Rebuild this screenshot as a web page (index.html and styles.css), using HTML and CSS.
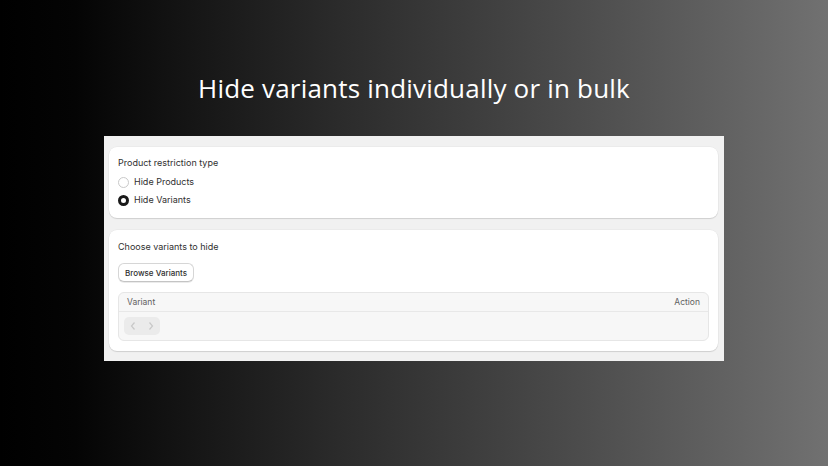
FILE: index.html
```html
<!DOCTYPE html>
<html>
<head>
<meta charset="utf-8">
<link rel="stylesheet" href="styles.css">
</head>
<body>
<div class="stage">
  <h1 class="title">Hide variants individually or in bulk</h1>
  <div class="shot">
    <section class="card card-first">
      <div class="label">Product restriction type</div>
      <div class="radio-row"><span class="radio"></span><span>Hide Products</span></div>
      <div class="radio-row"><span class="radio checked"></span><span>Hide Variants</span></div>
    </section>
    <section class="card card-second">
      <div class="label">Choose variants to hide</div>
      <button class="btn">Browse Variants</button>
      <div class="table">
        <div class="thead"><span>Variant</span><span>Action</span></div>
        <div class="tbody">
          <div class="pager">
            <span class="pg"><svg width="8" height="10" viewBox="0 0 8 10"><path d="M5.5 1.5 L2.5 5 L5.5 8.5" fill="none" stroke="#c8c8c8" stroke-width="1.2"/></svg></span>
            <span class="pg"><svg width="8" height="10" viewBox="0 0 8 10"><path d="M2.5 1.5 L5.5 5 L2.5 8.5" fill="none" stroke="#c8c8c8" stroke-width="1.2"/></svg></span>
          </div>
        </div>
      </div>
    </section>
  </div>
</div>
</body>
</html>
```

FILE: styles.css
```css
html, body {
  margin: 0;
  padding: 0;
}
body {
  width: 828px;
  height: 466px;
  overflow: hidden;
  background: linear-gradient(to right, #000 0%, #040404 9%, #2a2a2a 40%, #4c4c4c 70%, #717171 100%);
  font-family: Inter, "Noto Sans", sans-serif;
}
.stage {
  display: flex;
  flex-direction: column;
  align-items: center;
  padding-top: 70px;
}
.title {
  margin: 0;
  font-family: "Open Sans", sans-serif;
  font-weight: 400;
  font-size: 26px;
  line-height: 36px;
  color: #fff;
  letter-spacing: 0.2px;
}
.shot {
  margin-top: 30px;
  width: 620px;
  box-sizing: border-box;
  background: #f1f1f1;
  padding: 11px 6px 10px 5px;
  display: flex;
  flex-direction: column;
  gap: 12px;
}
.card {
  background: #fff;
  border-radius: 8px;
  box-shadow: 0 1px 1px rgba(0,0,0,0.12), 0 0 0 0.5px rgba(0,0,0,0.05);
  padding: 10px 9px 10px 9px;
  font-size: 9px;
  color: #303030;
}
.card-first {
  height: 71px;
  box-sizing: border-box;
}
.card-second {
  height: 121px;
  box-sizing: border-box;
  padding-top: 11px;
}
.label {
  line-height: 12px;
  color: #303030;
}
.radio-row {
  display: flex;
  align-items: center;
  gap: 5px;
  margin-top: 6px;
  line-height: 12px;
}
.card-first .label + .radio-row {
  margin-top: 7px;
}
.radio {
  width: 11px;
  height: 11px;
  box-sizing: border-box;
  border-radius: 50%;
  border: 1px solid #c9c9c9;
  background: #fff;
}
.radio.checked {
  border: 3px solid #1a1a1a;
}
.btn {
  display: block;
  margin-top: 10px;
  height: 19px;
  padding: 0 6px;
  font-family: Inter, "Noto Sans", sans-serif;
  font-size: 8px;
  font-weight: 500;
  color: #303030;
  background: #fff;
  border: 1px solid #d6d6d6;
  border-bottom-color: #c4c4c4;
  border-radius: 6px;
  box-shadow: 0 1px 0 rgba(0,0,0,0.08);
}
.table {
  margin-top: 10px;
  border: 1px solid #e6e6e6;
  border-radius: 6px;
  background: #f7f7f7;
  overflow: hidden;
}
.thead {
  display: flex;
  justify-content: space-between;
  align-items: center;
  height: 18px;
  padding: 0 8px;
  font-size: 8.5px;
  color: #616161;
  border-bottom: 1px solid #e8e8e8;
}
.tbody {
  height: 28px;
  display: flex;
  align-items: center;
  padding-left: 5px;
}
.pager {
  display: flex;
  background: #ebebeb;
  border-radius: 5px;
  height: 18px;
}
.pg {
  width: 18px;
  height: 18px;
  display: flex;
  align-items: center;
  justify-content: center;
}
```
